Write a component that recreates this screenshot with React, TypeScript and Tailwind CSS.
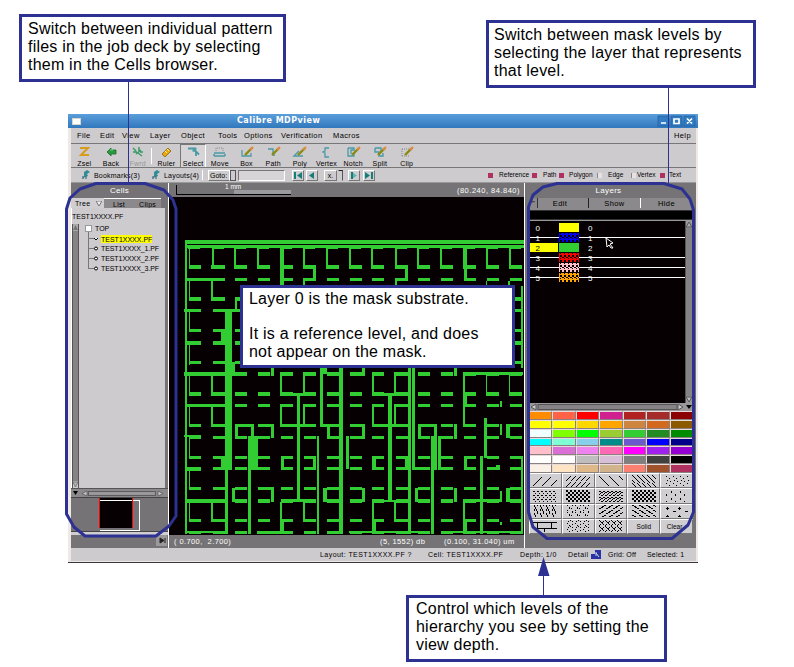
import type { ReactNode } from "react";

const NAVY = "#2d3191";
const GREEN = "#32cd32";

type Box = [number, number, number, number];

/* ---------- mask layout drawing (x1, y1, x2, y2) ---------- */
const columns = [189, 213, 235, 258, 281, 304, 327, 350, 372, 396, 418, 441, 464, 487, 510];
const rows: [number, number][] = [
  [265, 4], [278, 3], [297, 4], [309, 3], [329, 3], [341, 4], [361, 3], [372, 4], [392, 4],
  [404, 3], [424, 3], [436, 3], [456, 3], [467, 3], [487, 3], [499, 4], [519, 3], [531, 3],
];

const segments: Box[] = rows.flatMap(([y, h]) =>
  columns.map((x): Box => [x, y, Math.min(x + 12, 523), y + h])
);

const wires: Box[] = [
  [185, 240, 524, 244], [185, 245, 524, 248], [185, 240, 187, 534],
  ...columns.map((x): Box => [x - 1, 248, x + 11, 249]),
  ...columns.map((x, i): Box => [i === 0 ? x : x - 1, 248, i % 6 === 0 ? x + 1 : x + 1, 269]),
  ...[281, 312, 345, 376, 407, 439, 470, 502].map((y): Box => [189, y, 190, y + 20]),
  [211, 265, 225, 269], [211, 281, 213, 300], [211, 297, 225, 301],
  [211, 374, 213, 396], [211, 405, 213, 427], [211, 500, 213, 522],
  [186, 278, 225, 281], [184, 309, 201, 312], [213, 309, 241, 312], [186, 341, 201, 345],
  [184, 372, 235, 376], [186, 404, 226, 407], [184, 435, 201, 437], [186, 467, 201, 471],
  [186, 499, 226, 503], [186, 531, 226, 533],
  [235, 298, 237, 311], [235, 298, 241, 300],
  [280, 248, 284, 286], [303, 278, 305, 286], [313, 265, 316, 281],
  [405, 265, 408, 281], [395, 278, 397, 286], [464, 248, 467, 281], [486, 281, 487, 286], [508, 281, 510, 286],
  [521, 286, 523, 368],
  [225, 309, 232, 470], [225, 470, 228, 534], [221, 329, 226, 344], [221, 457, 226, 470],
  [232, 362, 235, 376],
  [235, 424, 238, 439], [235, 424, 254, 427], [251, 424, 254, 437], [258, 424, 274, 427], [271, 424, 274, 438],
  [248, 436, 258, 470], [248, 470, 251, 534], [248, 467, 270, 470],
  [271, 367, 274, 376], [232, 488, 235, 502], [271, 488, 274, 502], [258, 487, 274, 490],
  [280, 372, 282, 396], [303, 372, 305, 396], [281, 393, 316, 396], [297, 393, 300, 502],
  [280, 404, 282, 427], [303, 404, 305, 426], [280, 424, 316, 427],
  [281, 456, 284, 470], [313, 456, 316, 470],
  [317, 436, 319, 534], [320, 367, 323, 427], [320, 367, 327, 374], [320, 424, 339, 427], [327, 424, 330, 439],
  [339, 367, 343, 534], [346, 436, 349, 469],
  [281, 499, 316, 502], [280, 502, 282, 534], [281, 520, 284, 534], [303, 502, 305, 522],
  [323, 488, 327, 502], [257, 531, 293, 534],
  [362, 368, 365, 376], [362, 424, 365, 439], [362, 488, 365, 502],
  [372, 372, 374, 396], [394, 372, 396, 396], [372, 393, 409, 396], [388, 393, 392, 502],
  [372, 404, 374, 427], [394, 404, 396, 424], [372, 424, 409, 427],
  [372, 456, 376, 470], [405, 456, 409, 470], [408, 367, 411, 534], [412, 367, 415, 470],
  [412, 467, 430, 470], [418, 424, 421, 439], [418, 424, 437, 427], [434, 424, 437, 470],
  [431, 436, 434, 534], [438, 436, 441, 470],
  [454, 368, 457, 376], [454, 424, 457, 439], [454, 488, 457, 502], [415, 488, 418, 502],
  [372, 500, 409, 502], [372, 502, 374, 522], [394, 502, 396, 522], [372, 520, 376, 534],
  [463, 372, 523, 375], [463, 372, 465, 427], [465, 393, 467, 407], [486, 375, 487, 396], [509, 375, 510, 396],
  [484, 418, 487, 458], [500, 401, 502, 407], [500, 424, 502, 435], [506, 424, 510, 438],
  [464, 456, 467, 470], [480, 456, 483, 534], [496, 465, 500, 470],
  [500, 491, 502, 502], [506, 488, 510, 502], [463, 499, 500, 502],
  [463, 500, 465, 534], [464, 520, 467, 534], [500, 522, 502, 525], [521, 456, 523, 534],
  [349, 531, 430, 533], [441, 531, 523, 533],
];

function MaskView() {
  return (
    <svg className="block h-[338px] w-[355px] bg-[#060002]" viewBox="169 197 355 338" shapeRendering="crispEdges">
      {[...segments, ...wires].map(([a, b, c, d], i) => (
        <rect key={i} x={a} y={b} width={c - a} height={d - b} fill={GREEN} />
      ))}
    </svg>
  );
}

/* ---------- toolbar ---------- */
const TEAL = "#4a9aa5";
const Pencil = () => (
  <>
    <path d="M8 9 L15 2" stroke="#8a8a10" strokeWidth="2.4" />
    <path d="M13 4 L16 1" stroke="#e08a40" strokeWidth="2.2" />
  </>
);

const toolIcons: Record<string, ReactNode> = {
  Zsel: <path d="M5 2 H13 L6 9 H14" stroke="#d89b1c" strokeWidth="2" />,
  Back: (
    <>
      <path d="M5 6 L9 2 V4 H14 V8 H9 V10 Z" fill="#2a9a3c" stroke="#176a34" strokeWidth=".8" />
      <path d="M8 4 H11" stroke="#70e080" />
    </>
  ),
  Fwrd: <path d="M5 2 L8 5 M11 1 V5 M5 6 H9 M8 8 L13 4 M10 7 L14 10 M12 6 H15" stroke="#3a9b68" strokeWidth="1.5" />,
  Ruler: (
    <>
      <path d="M5 8 L11 2 L14 5 L8 11 Z" fill="#e8a80c" stroke="#8a6610" strokeWidth=".8" />
      <path d="M8 5 L10 7 M10 3 L12 5" stroke="#fff2a0" />
    </>
  ),
  Select: <path d="M4 2.500 H11.500 V5 L15 8.500 M12 5 L8.500 4.500 M12 6 V10" stroke={TEAL} strokeWidth="1.8" />,
  Move: (
    <>
      <path d="M4 7 H15 M4 10 H15 M4 8 V10 M15 8 V10" stroke={TEAL} strokeWidth="1.5" />
      <path d="M6 5 V2 H13 V5" stroke="#888" strokeDasharray="1 1" />
    </>
  ),
  Box: (
    <>
      <path d="M5 4 V10 H14 V7" stroke={TEAL} strokeWidth="1.3" />
      <Pencil />
    </>
  ),
  Path: (
    <>
      <path d="M4 3 H9 V9 H11" stroke={TEAL} strokeWidth="1.4" />
      <Pencil />
    </>
  ),
  Poly: (
    <>
      <path d="M9 5 L4 10 H13" stroke={TEAL} strokeWidth="1.4" />
      <Pencil />
    </>
  ),
  Vertex: <path d="M12 2 H8 V5 L6 6 L8 7 V11 H12" stroke={TEAL} strokeWidth="1.3" />,
  Notch: (
    <>
      <path d="M4 2 V10 H10 V7 M4 2 H10 V4 H7 V8" stroke={TEAL} strokeWidth="1.3" />
      <Pencil />
    </>
  ),
  Split: (
    <>
      <path d="M5 2 H11 V5 M5 2 V6 H9 V10 H13 V7" stroke={TEAL} strokeWidth="1.4" />
      <Pencil />
    </>
  ),
  Clip: (
    <>
      <path d="M5 3 H12 M5 3 V10 M5 10 H12" stroke="#888" strokeDasharray="1 1" />
      <Pencil />
    </>
  ),
};

function Tool({ name, active, muted }: { name: string; active?: boolean; muted?: boolean }) {
  const frame = active
    ? "border-t-[#777] border-l-[#777] border-r-white bg-[#d6d4d6]"
    : "border-transparent";
  return (
    <div className={`flex h-[23px] w-[26.7px] flex-col items-center border-x border-t ${frame}`}>
      <svg className="mt-px h-[13px] w-[19px] shrink-0" viewBox="0 0 19 13" fill="none">
        {toolIcons[name]}
      </svg>
      <span className={`text-[7px] leading-[9px] tracking-[0.2px] ${muted ? "text-[#969696]" : "text-black"}`}>{name}</span>
    </div>
  );
}

function NavButton({ children }: { children: ReactNode }) {
  return (
    <div className="h-[11px] w-[12px] border border-white border-r-[#777] border-b-[#777] bg-[#d0ced0]">
      <svg className="block h-[9px] w-[10px]" viewBox="0 0 10 9">{children}</svg>
    </div>
  );
}

const Bird = () => (
  <svg className="h-[10px] w-[9px]" viewBox="0 0 9 10">
    <path d="M3 2 L6 0 L9 2 L6 4 L7 6 L4 7 L1 9 L3 6 Z" fill="#328b95" />
    <path d="M2 6 V9 M5 6 V9" stroke="#245f70" />
  </svg>
);

const Dot = ({ on }: { on?: boolean }) => (
  <span className={`block h-[5px] w-[5px] ${on ? "bg-[#b03060]" : "border-l border-l-[#888] bg-[#e4e2e4]"}`} />
);

/* ---------- left panel ---------- */
const cellNames = ["TEST1XXXX.PF", "TEST1XXXX_1.PF", "TEST1XXXX_2.PF", "TEST1XXXX_3.PF"];

function CellsPanel() {
  return (
    <div className="flex w-[97px] flex-col bg-[#757375]">
      <div className="h-[15px] text-center text-[8px] leading-[15px] tracking-[0.2px] text-white">Cells</div>
      <div className="flex h-[10px] text-[7px] leading-[11px] tracking-[0.3px] text-black">
        <div className="flex w-[33px] items-center bg-[#d0ced0] pl-[4px]">
          Tree
          <svg className="ml-[6px] h-[5px] w-[6px]" viewBox="0 0 6 5"><path d="M0 0H6L3 5Z" fill="#eee" stroke="#777" /></svg>
        </div>
        <div className="w-[57px] border-t border-t-white bg-[#8b898b] pl-[9px]">
          <span className="mr-[14px]">List</span>
          <span>Clips</span>
        </div>
      </div>
      <div className="flex h-[280px]">
        <div className="w-[94px] border-l border-l-white bg-[#cecbce]">
          <div className="h-[16px] pt-[3px] text-[7px] leading-[11px] text-black">TEST1XXXX.PF</div>
          <div className="flex h-[264px]">
            <div className="flex w-[7px] flex-col justify-between border-x border-x-[#555] bg-[#858385]">
              <svg className="h-[7px] w-[5px] bg-[#aaa]" viewBox="0 0 5 7"><path d="M0 6L2.5 1L5 6Z" fill="#777" /></svg>
              <svg className="h-[7px] w-[5px] bg-[#ccc]" viewBox="0 0 5 7"><path d="M0 1H5L2.5 6Z" fill="#bbb" stroke="#777" /></svg>
            </div>
            <div className="flex">
              <svg className="h-[50px] w-[22px]" viewBox="0 0 22 50" fill="none" shapeRendering="crispEdges">
                <path d="M9.500 7V44 M9 14.500H15 M9 24.500H15 M9 34.500H15 M9 44.500H15" stroke="#777" />
                <rect x="6" y="1" width="6" height="6" fill="#fff" stroke="#999" />
                <g stroke="#000" fill="#fff" shapeRendering="auto">
                  <path d="M15 14L17 16L19 14" />
                  <circle cx="17" cy="24.500" r="1.500" /><circle cx="17" cy="34.500" r="1.500" /><circle cx="17" cy="44.500" r="1.500" />
                </g>
              </svg>
              <div className="text-[7px] leading-[10px] text-black">
                <div className="-ml-[6px] h-[10px]">TOP</div>
                {cellNames.map((n, i) => (
                  <div key={n} className="flex h-[10px] items-center whitespace-nowrap">
                    <span className={i === 0 ? "h-[8px] bg-[#ffff00] leading-[9px]" : "tracking-[-0.08px]"}>{n}</span>
                  </div>
                ))}
              </div>
            </div>
          </div>
        </div>
        <div className="w-[3px]" />
      </div>
      <div className="flex h-[9px] items-center justify-between border-t border-t-[#555] bg-[#8b898b] px-[2px]">
        <svg className="h-[4px] w-[5px]" viewBox="0 0 5 4"><path d="M0 0H5L2.500 4Z" fill="#000" /></svg>
        <svg className="h-[7px] w-[87px]" viewBox="0 0 87 7">
          <path d="M3 3.500L8 1V6Z M79 1L84 3.500L79 6Z" fill="#ccc" stroke="#666" />
          <rect x="9.500" y="1.500" width="67" height="4" fill="#999" stroke="#5e5c5e" />
        </svg>
      </div>
      <div className="h-[35px] border-t border-t-[#444] border-b border-b-[#444]">
        <svg className="block h-[34px] w-[97px]" viewBox="71 498 97 34" shapeRendering="crispEdges">
          <rect x="99" y="498" width="34" height="30" fill="#060002" />
          <path d="M100 500.500H139.500V530.500H100" fill="none" stroke="#fff" />
          <rect x="99" y="498" width="1" height="30" fill="red" />
          <rect x="132" y="498" width="1" height="30" fill="red" />
        </svg>
      </div>
      <div className="h-[3px] bg-[#d0ced0]" />
    </div>
  );
}

/* ---------- right panel ---------- */
const layers = [
  { id: 0, fill: "#ffff00", hatched: false },
  { id: 1, fill: "#0000ff", hatched: true },
  { id: 2, fill: GREEN, hatched: false },
  { id: 3, fill: "#ff0000", hatched: true },
  { id: 4, fill: "#ffc0cb", hatched: true },
  { id: 5, fill: "#ffa500", hatched: true },
];

const palette = [
  "bg-[#ff8c00]", "bg-[#ff6347]", "bg-[#ff0000]", "bg-[#d02090]", "bg-[#b22222]", "bg-[#a52a2a]", "bg-[#8b0000]",
  "bg-[#ffff00]", "bg-[#ffff00]", "bg-[#ffd700]", "bg-[#ffa500]", "bg-[#cd853f]", "bg-[#d2691e]", "bg-[#8b5a00]",
  "bg-[#f0ffff]", "bg-[#7fff00]", "bg-[#00ff00]", "bg-[#9acd32]", "bg-[#32cd32]", "bg-[#228b22]", "bg-[#008b00]",
  "bg-[#00ffff]", "bg-[#7fffd4]", "bg-[#87ceeb]", "bg-[#008b8b]", "bg-[#6a5acd]", "bg-[#0000ff]", "bg-[#00008b]",
  "bg-[#ffc0cb]", "bg-[#da70d6]", "bg-[#ee82ee]", "bg-[#ff69b4]", "bg-[#ff00ff]", "bg-[#a020f0]", "bg-[#9400d3]",
  "bg-[#ffffff]", "bg-[#ffffff]", "bg-[#bebebe]", "bg-[#d8bfd8]", "bg-[#7f7f7f]", "bg-[#404040]", "bg-[#000000]",
  "bg-[#faf0e6]", "bg-[#ffe4c4]", "bg-[#deb887]", "bg-[#d2b48c]", "bg-[#fa8072]", "bg-[#a0522d]", "bg-[#b03060]",
];

/* one motif per pattern button, tiled inside its 24x12 well */
const motifs: { size: [number, number]; d: string; w?: number }[] = [
  { size: [9, 12], d: "M0 11L9 2" },
  { size: [5, 12], d: "M0 6L5 1M0 12L5 7" },
  { size: [10, 12], d: "M0 1L10 11" },
  { size: [5, 8], d: "M0 0L5 5M0 5L3 8" },
  { size: [7, 7], d: "M1 1H2M4 3H5M2 5V6M5 6H6" },
  { size: [4, 4], d: "M0 1.500H2M2 3.500H3" },
  { size: [4, 4], d: "M0 1H2M2 3H4", w: 2 },
  { size: [4, 6], d: "M0 1.500H2M2 2.500H4M0 4.500H1M2 5.500H4M1 3.500H2" },
  { size: [4, 4], d: "M0 1H2M2 3H4", w: 2 },
  { size: [9, 7], d: "M1 5H2M6 2H7", w: 1.4 },
  { size: [6, 8], d: "M1.500 0V2M2.500 2V4M1.500 4V6M4.500 0V1M3.500 4V6M4.500 6V8" },
  { size: [8, 7], d: "M1.500 0V1M3.500 2V4M1.500 5V6M6.500 0V1M5.500 3V4M6.500 6V7" },
  { size: [7, 5], d: "M0 4L7 0" },
  { size: [7, 5], d: "M0 0L7 4" },
  { size: [12, 8], d: "M1 3.500H4M2.500 2V5M8 6.500H11" },
  { size: [14, 12], d: "M0 2.500H14M0 8.500H14M4.500 2V8M11.500 8V12" },
  { size: [8, 6], d: "M1 3.500H2M2 1.500H3M4 .500H5M6 1.500H7M6 4.500H7M3 5.500H4" },
  { size: [6, 6], d: "M0 .500H1M1 1.500H2M2 2.500H4M4 1.500H5M1 4.500H2M4 4.500H5M0 5.500H1M3 3.500H4" },
];

function PatternWell({ index }: { index: number }) {
  const m = motifs[index];
  return (
    <svg className="h-[12px] w-[24px]" viewBox="0 0 24 12">
      <defs>
        <pattern id={`motif${index}`} width={m.size[0]} height={m.size[1]} patternUnits="userSpaceOnUse">
          <path d={m.d} stroke="#000" strokeWidth={m.w ?? 1} fill="none" shapeRendering="crispEdges" />
        </pattern>
      </defs>
      <rect width="24" height="12" fill={`url(#motif${index})`} />
    </svg>
  );
}

function LayersPanel() {
  return (
    <div className="w-[171px] bg-[#757375]">
      <div className="h-[15px] pr-[4px] text-center text-[8px] leading-[15px] tracking-[0.3px] text-white">Layers</div>
      <div className="ml-[5px] flex h-[10px] text-center text-[7.5px] leading-[11px] tracking-[0.4px] text-black">
        <div className="w-[8px] border-r border-r-[#333] bg-[#8b898b]">"</div>
        <div className="w-[51px] border-r border-r-[#222] bg-[#8b898b] pr-[6px]">Edit</div>
        <div className="w-[52px] border-r border-r-white bg-[#8b898b]">Show</div>
        <div className="w-[51px] bg-[#8b898b]">Hide</div>
      </div>
      <div className="ml-[5px] h-[2px] w-[163px] bg-[#8b898b]" />
      <div className="ml-[5px] h-[10px] w-[163px] border-y border-y-[#333] bg-black" />
      <div className="ml-[5px] flex h-[183px] w-[163px] border-t border-t-[#999]">
        <svg className="block h-[182px] w-[155px] bg-[#060002]" viewBox="530 221 155 182" shapeRendering="crispEdges">
          <defs>
            <pattern id="hatch" x="560" y="234" width="4" height="5" patternUnits="userSpaceOnUse">
              <path d="M0 1H2V3H0Z M2 3H4V4H2Z M0 4H1V5H0Z" fill="#060002" />
            </pattern>
          </defs>
          <rect x="530" y="243" width="28" height="9" fill="#ffff00" />
          {layers.map((l) => {
            const y = 223 + l.id * 10;
            return (
              <g key={l.id}>
                <rect x="559" y={y} width="20" height="9" fill={l.fill} />
                {l.hatched && <rect x="560" y={y} width="19" height="9" fill="url(#hatch)" />}
                {l.hatched && <path d={`M530 ${y + 4.5}H559M579 ${y + 4.5}H685`} stroke="#fff" />}
                <text x="535.500" y={y + 7.5} fill={l.id === 2 ? "#000" : "#fff"} className="text-[8px]">{l.id}</text>
                <text x="588" y={y + 7.5} fill="#fff" className="text-[8px]">{l.id}</text>
              </g>
            );
          })}
          <path d="M606 238L613 243L610 244L613 248L611 248L609 245L607 247Z" fill="#060002" stroke="#fff" shapeRendering="auto" />
        </svg>
        <div className="flex w-[8px] flex-col items-center justify-between border-x border-x-[#555] bg-[#858385]">
          <svg className="h-[7px] w-[6px] bg-[#999]" viewBox="0 0 6 7"><path d="M0 6L3 1L6 6Z" fill="#aaa" stroke="#555" /></svg>
          <svg className="h-[7px] w-[6px] bg-[#999]" viewBox="0 0 6 7"><path d="M0 1H6L3 6Z" fill="#bbb" stroke="#555" /></svg>
        </div>
      </div>
      <svg className="ml-[5px] block h-[8px] w-[163px] bg-[#9a989a]" viewBox="0 0 163 8">
        <path d="M6 1V7L1 4Z M148 1V7L153 4Z" fill="#ccc" stroke="#555" />
        <rect x="8" y="1.500" width="139" height="5" fill="#858385" stroke="#555" />
        <path d="M156 2H162L159 6Z" fill="#000" />
      </svg>
      <div className="ml-[4px] grid h-[62px] w-[164px] grid-cols-7 grid-rows-7 bg-[#d0ced0]">
        {palette.map((c, i) => (
          <div key={i} className={`border border-t-[#e6dcdc] border-l-[#e6dcdc] border-r-[#8b7f7f] border-b-[#8b7f7f] ${c}`} />
        ))}
      </div>
      <div className="ml-[4px] grid h-[61px] w-[164px] grid-cols-5 grid-rows-4 text-[6.5px] text-black">
        {Array.from({ length: 20 }, (_, i) => (
          <div key={i} className="flex items-center justify-center overflow-hidden border border-t-white border-l-white border-r-[#777] border-b-[#777] bg-[#d0ced0]">
            {i < 18 ? <PatternWell index={i} /> : i === 18 ? "Solid" : <span className="mr-[4px]">Clear</span>}
          </div>
        ))}
      </div>
      <div className="h-[1px]" />
    </div>
  );
}

/* ---------- the application window ---------- */
function MdpWindow() {
  return (
    <div className="mt-[114px] ml-[68px] h-[449px] w-[630px] border-b border-b-[#3a3538] bg-[#efe9e6]">
      <div className="flex h-[14px] items-center bg-linear-to-b from-[#5a9edb] to-[#3078bd] pr-[2px] pl-[4px]">
        <div className="h-[7px] w-[9px] border border-[#d9d4cc] bg-white" />
        <div className="ml-[156px] w-[90px] font-['DejaVu_Sans'] text-[8px] leading-[14px] font-bold tracking-[0.5px] whitespace-nowrap text-white">
          Calibre MDPview
        </div>
        <svg className="ml-auto h-[12px] w-[40px]" viewBox="0 0 40 12" fill="none">
          <g fill="#337cc2" stroke="#1f5d9e" strokeWidth=".7">
            <rect x="2" y="1" width="11" height="10" /><rect x="15" y="1" width="11" height="10" /><rect x="28" y="1" width="11" height="10" />
          </g>
          <path d="M5 8H10 M18 4H23V8.500H18Z M31 3.500L36 8.500M36 3.500L31 8.500" stroke="#fff" strokeWidth="1.700" />
        </svg>
      </div>
      <div className="mr-[2px] ml-[3px] bg-[#cecbce]">
        <div className="flex h-[16px] border-b border-b-[#777] pl-[6px] text-[7.5px] leading-[15px] tracking-[0.4px] text-black">
          <span className="w-[23px]">File</span>
          <span className="w-[22px]">Edit</span>
          <span className="w-[28px]">View</span>
          <span className="w-[31px]">Layer</span>
          <span className="w-[37px]">Object</span>
          <span className="w-[26px]">Tools</span>
          <span className="w-[37px]">Options</span>
          <span className="w-[52px]">Verification</span>
          <span>Macros</span>
          <span className="mr-[5px] ml-auto">Help</span>
        </div>
        <div className="flex h-[24px] border-b border-b-[#777]">
          <Tool name="Zsel" />
          <Tool name="Back" />
          <Tool name="Fwrd" muted />
          <div className="mt-[4px] mr-[1px] h-[16px] w-[1px] bg-white" />
          <Tool name="Ruler" />
          <Tool name="Select" active />
          <Tool name="Move" />
          <Tool name="Box" />
          <Tool name="Path" />
          <Tool name="Poly" />
          <Tool name="Vertex" />
          <Tool name="Notch" />
          <Tool name="Split" />
          <Tool name="Clip" />
        </div>
        <div className="flex h-[15px] items-center border-b border-b-[#999] pl-[10px] text-[7px] leading-[12px] whitespace-nowrap text-black">
          <Bird />
          <span className="ml-[4px] w-[57px] pt-px tracking-[0.2px]">Bookmarks(3)</span>
          <Bird />
          <span className="ml-[4px] w-[38px] pt-px tracking-[0.2px]">Layouts(4)</span>
          <div className="h-[10px] w-[6px] border-l border-l-white" />
          <div className="h-[11px] w-[22px] border border-white border-b-[#777] pl-[1px] leading-[10px]">Goto:</div>
          <div className="h-[11px] w-[6px] border border-[#555]" />
          <div className="ml-[2px] h-[11px] w-[47px] border border-[#777] border-r-white border-b-white bg-[#d6d4d6]" />
          <div className="ml-[7px] flex">
            <NavButton><path d="M1 1H3V8H1Z M9 1V8L4 4.500Z" fill="#167d78" /></NavButton>
            <div className="ml-[2px]"><NavButton><path d="M7 1V8L2 4.500Z" fill="#167d78" /></NavButton></div>
            <div className="ml-[6px] h-[11px] w-[13px] border border-white border-r-[#777] border-b-[#777] text-center leading-[9px]">x.</div>
            <div className="ml-[1px] h-[11px] w-[5px] border border-t-[#222] border-r-[#555] border-b-transparent border-l-transparent" />
            <div className="ml-[5px]"><NavButton><path d="M3 1V8L8 4.500Z" fill="#65b4b0" /><path d="M2 1H4V8H2Z" fill="#167d78" /></NavButton></div>
            <div className="ml-[3px]"><NavButton><path d="M1 1V8L6 4.500Z M7 1H9V8H7Z" fill="#167d78" /></NavButton></div>
          </div>
          <div className="mr-[15px] ml-auto flex items-center text-[6.5px]">
            <Dot on /><span className="ml-[6px] w-[33px]">Reference</span>
            <Dot on /><span className="ml-[6px] w-[16px]">Path</span>
            <Dot on /><span className="ml-[5px] w-[28px]">Polygon</span>
            <Dot /><span className="ml-[6px] w-[23px]">Edge</span>
            <Dot /><span className="ml-[1px] w-[23px]">Vertex</span>
            <Dot on /><span className="ml-[4px]">Text</span>
          </div>
        </div>
        <div className="flex h-[352px]">
          <CellsPanel />
          <div className="w-[1px] bg-white" />
          <div className="w-[355px]">
            <div className="flex h-[14px] justify-between bg-[#757375] pr-[4px] pl-[7px] text-[7.5px] text-white">
              <svg className="h-[13px] w-[117px]" viewBox="176 184 117 13" shapeRendering="crispEdges">
                <path d="M176.500 186V195.500H291" stroke="#000" fill="none" />
                <rect x="234" y="191" width="57" height="4" fill="#9c9a9c" />
                <text x="225" y="190" fill="#fff" className="text-[6.500px]">1 mm</text>
              </svg>
              <span className="leading-[15px] tracking-[0.5px]">(80.240, 84.840)</span>
            </div>
            <MaskView />
          </div>
          <div className="w-[1px] bg-white" />
          <LayersPanel />
        </div>
        <div className="flex h-[13px] bg-[#757375] text-[7.5px] leading-[13px] tracking-[0.4px] whitespace-pre text-white">
          <div className="flex w-[98px] justify-end border-r border-r-white">
            <svg className="mr-[1px] h-[11px] w-[11px] bg-[#9a989a]" viewBox="0 0 11 11"><path d="M4 3L8 5.500L4 8ZM9 3V8" fill="#222" stroke="#222" /></svg>
          </div>
          <span className="w-[211px] pl-[5px]">( 0.700,  2.700)</span>
          <span className="w-[64px]">(5, 1552) db</span>
          <span className="w-[81px] border-r border-r-white">(0.100, 31.040) um</span>
        </div>
        <div className="flex h-[13px] items-center pl-[249px] text-[7px] leading-[13px] tracking-[0.45px] whitespace-nowrap text-black">
          <span className="w-[108px]">Layout: TEST1XXXX.PF ?</span>
          <span className="w-[92px]">Cell: TEST1XXXX.PF</span>
          <span className="w-[48px]">Depth: 1/0</span>
          <span className="w-[23px]">Detail</span>
          <svg className="h-[9px] w-[10px]" viewBox="0 0 10 9"><path d="M0 9V4H4V0H10V9Z" fill="#2933a5" /><path d="M5 3L8 7M5 2V6" stroke="#cdd" /></svg>
          <span className="ml-[7px] w-[39px] tracking-[0.2px]">Grid: Off</span>
          <span className="tracking-[0.2px]">Selected: 1</span>
        </div>
      </div>
    </div>
  );
}

function Callout({ place, lines }: { place: string; lines: string[] }) {
  return (
    <div className={`absolute border-[3px] border-[#2d3191] bg-white text-[16px] tracking-[0.22px] whitespace-nowrap text-black ${place}`}>
      {lines.map((t, i) => (
        <div key={i}>{t || "\u00a0"}</div>
      ))}
    </div>
  );
}

export default function App() {
  return (
    <div className="relative flow-root h-[667px] w-[794px] overflow-hidden bg-white font-['Liberation_Sans',Arial,sans-serif]">
      <MdpWindow />
      <svg className="pointer-events-none absolute inset-0 h-[667px] w-[794px]" viewBox="0 0 794 667" fill="none" stroke={NAVY}>
        <path d="M128.500 82V183 M668.500 88V183 M543.500 576V596" shapeRendering="crispEdges" />
        <path d="M96 183.500H145L164 190L173 200L176 209V516L169 526L156 536H85L74 527L66.500 514V209L70 198L80 189Z" strokeWidth="3" strokeLinejoin="round" />
        <path d="M557 183.500H664L682 189L690 199L693.500 210V512L688 525L672 538.500H547L533 527L528.500 512V207L533 195L543 187Z" strokeWidth="3" strokeLinejoin="round" />
        <path d="M543.500 557L549.500 576H538Z" fill={NAVY} stroke="none" />
      </svg>
      <Callout
        place="top-[14px] left-[19px] h-[68px] w-[267px] pt-[2.5px] pl-[6px] leading-[18.4px]"
        lines={["Switch between individual pattern", "files in the job deck by selecting", "them in the Cells browser."]}
      />
      <Callout
        place="top-[20px] left-[486px] h-[68px] w-[270px] pt-[2.5px] pl-[5px] leading-[18.4px]"
        lines={["Switch between mask levels by", "selecting the layer that represents", "that level."]}
      />
      <Callout
        place="top-[285px] left-[240px] h-[83px] w-[275px] pt-[1.5px] pl-[6px] leading-[17.7px]"
        lines={["Layer 0 is the mask substrate.", "", "It is a reference level, and does", "not appear on the mask."]}
      />
      <Callout
        place="top-[595px] left-[406px] h-[67px] w-[261px] pt-[1.5px] pl-[7px] leading-[18.4px]"
        lines={["Control which levels of the", "hierarchy you see by setting the", "view depth."]}
      />
    </div>
  );
}
